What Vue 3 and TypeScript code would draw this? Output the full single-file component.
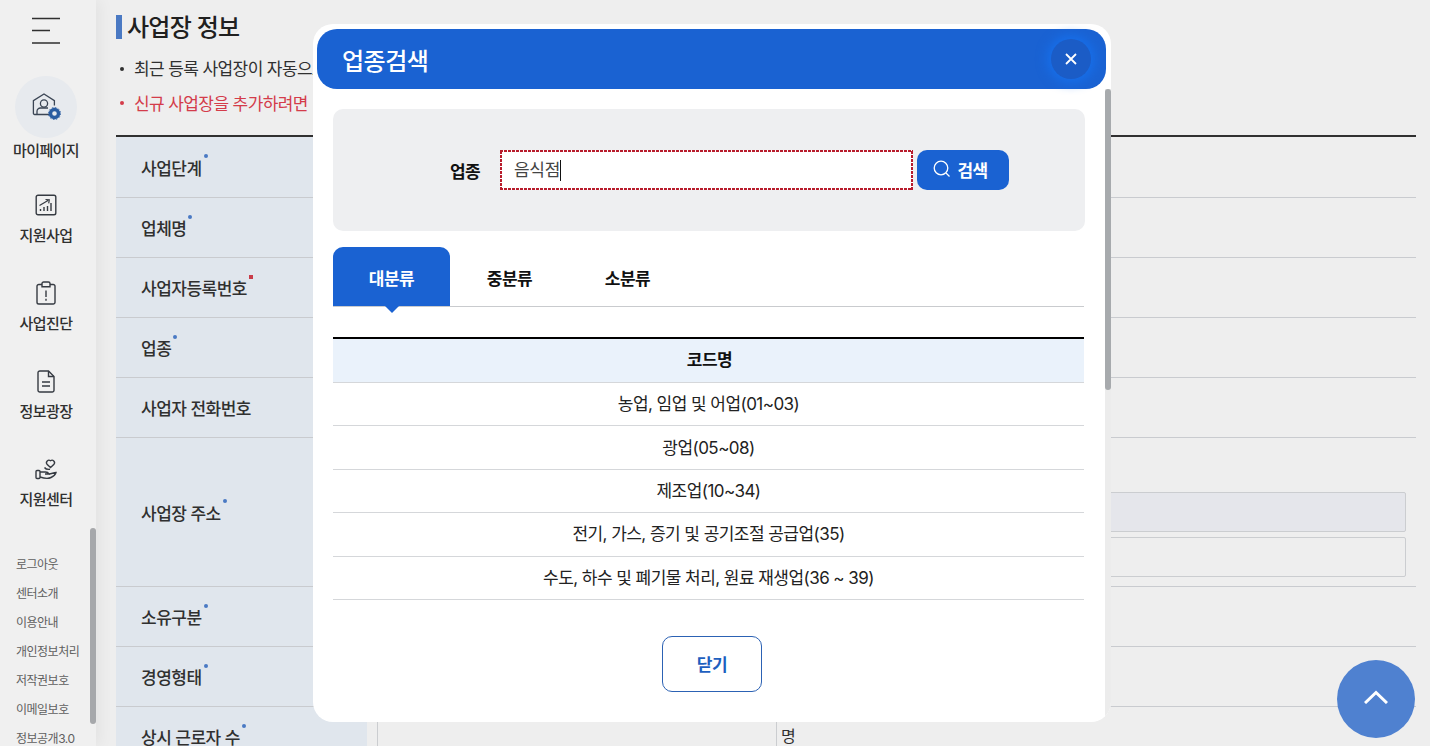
<template>
  <div class="page">
    <aside class="sidebar">
      <svg class="burger" width="28" height="28" viewBox="0 0 28 28" fill="none" stroke="#333" stroke-width="1.5">
        <path d="M0 1.5h28M0 13.5h18M0 26h28" />
      </svg>

      <nav class="nav">
        <a class="nav-item first">
          <span class="nav-circle">
            <svg width="30" height="30" viewBox="0 0 30 30" fill="none" stroke="#3f4a5a" stroke-width="1.3">
              <path d="M19 22.5H3.6a1.2 1.2 0 0 1-1.2-1.2V8.6L13 2l10.4 6.6v5" />
              <circle cx="13" cy="11.5" r="3.6" />
              <path d="M6 22v-2.5a3.5 3.5 0 0 1 3.5-3.5H17" />
              <circle cx="23.5" cy="21.5" r="4" stroke="#2d63ac" stroke-width="3.4" />
              <circle cx="23.5" cy="21.5" r="6" stroke="#2d63ac" stroke-width="1" stroke-dasharray="1.6 1.5" />
            </svg>
          </span>
          <span class="nav-label">마이페이지</span>
        </a>
        <a class="nav-item">
          <span class="nav-icon">
            <svg width="22" height="22" viewBox="0 0 22 22" fill="none" stroke="#3a3f47" stroke-width="1.4">
              <rect x="1.2" y="1.2" width="19.6" height="19.6" rx="1.8" />
              <path d="M4.5 11.5 13 6.5M10.5 5.5l3.8.3-.6 3.6" stroke-width="1.2" />
              <path d="M5.5 17v-2M9 17v-4M12.500 17v-5M16 17V9" />
            </svg>
          </span>
          <span class="nav-label">지원사업</span>
        </a>
        <a class="nav-item">
          <span class="nav-icon">
            <svg width="20" height="24" viewBox="0 0 20 24" fill="none" stroke="#3a3f47" stroke-width="1.4">
              <path d="M6 3.500H2.800A1.800 1.800 0 0 0 1 5.300v15.900A1.800 1.800 0 0 0 2.800 23h14.400a1.800 1.800 0 0 0 1.800-1.800V5.300a1.800 1.800 0 0 0-1.800-1.800H14" />
              <path d="M6 5.800V2.600A1.600 1.600 0 0 1 7.600 1h4.800A1.600 1.600 0 0 1 14 2.600v3.200z" />
              <path d="M10 9.500v6.500M10 17.800v2" />
            </svg>
          </span>
          <span class="nav-label">사업진단</span>
        </a>
        <a class="nav-item">
          <span class="nav-icon">
            <svg width="18" height="23" viewBox="0 0 18 23" fill="none" stroke="#3a3f47" stroke-width="1.4">
              <path d="M11.500 1H2.800A1.800 1.800 0 0 0 1 2.800v17.400A1.800 1.800 0 0 0 2.800 22h12.400a1.800 1.800 0 0 0 1.800-1.800V6.500z" />
              <path d="M11.500 1v5.500H17" />
              <path d="M5 12h8M5 16h8" />
            </svg>
          </span>
          <span class="nav-label">정보광장</span>
        </a>
        <a class="nav-item">
          <span class="nav-icon">
            <svg width="23" height="22" viewBox="0 0 23 22" fill="none" stroke="#3a3f47" stroke-width="1.4">
              <path d="M15.500 9.500 12 6.200a2.500 2.500 0 0 1 3.500-3.500 2.500 2.500 0 0 1 3.500 3.500z" />
              <rect x="1" y="12.500" width="4" height="8" rx="1" />
              <path d="M5 14h5.500c2 0 3 1 3.500 2h-4" />
              <path d="M5 19c6 2 9 1.500 11 .5 2-1 4.500-3 5-5-2.500 0-4.500 1.500-7 1.500" />
              <path d="M9.500 9.500c1 1.500 3.500 2 5.500 1.800" />
            </svg>
          </span>
          <span class="nav-label">지원센터</span>
        </a>
      </nav>

      <ul class="links">
        <li v-for="link in footerLinks" :key="link">{{ link }}</li>
      </ul>
      <div class="side-thumb"></div>
    </aside>

    <main class="main">
      <h1 class="page-title">사업장 정보</h1>
      <ul class="guide">
        <li>최근 등록 사업장이 자동으로</li>
        <li class="red">신규 사업장을 추가하려면</li>
      </ul>

      <div class="form">
        <div v-for="row in formRows" :key="row.label" class="form-row" :class="row.kind">
          <div class="form-th">
            {{ row.label }}<i v-if="row.mark" class="mark" :class="row.mark"></i>
          </div>
          <div class="form-td">
            <template v-if="row.kind === 'address'">
              <div class="box postcode"></div>
              <div class="box filled"></div>
              <div class="box"></div>
            </template>
            <template v-else-if="row.kind === 'workers'">
              <div class="box half"></div>
              <span class="unit">명</span>
            </template>
          </div>
        </div>
      </div>
    </main>

    <div class="scrim"></div>

    <section class="modal">
      <header class="modal-head">
        <h2>업종검색</h2>
        <button class="modal-x" type="button" aria-label="닫기">
          <svg width="12" height="12" viewBox="0 0 12 12" stroke="#fff" stroke-width="1.8" fill="none">
            <path d="M1 1l10 10M11 1 1 11" />
          </svg>
        </button>
      </header>

      <div class="modal-body">
        <div class="search-box">
          <label class="search-label">업종</label>
          <div class="search-input">음식점<i class="caret"></i></div>
          <button class="search-btn" type="button">
            <svg width="18" height="18" viewBox="0 0 18 18" fill="none" stroke="#fff" stroke-width="1.3">
              <circle cx="8" cy="8" r="6.800" />
              <path d="M13 13l3.500 3.500" />
            </svg>
            검색
          </button>
        </div>

        <div class="tabs">
          <button
            v-for="(tab, i) in tabs"
            :key="tab"
            class="tab"
            :class="{ active: i === 0 }"
            type="button"
          >
            {{ tab }}
          </button>
        </div>

        <table class="code-table">
          <thead>
            <tr><th>코드명</th></tr>
          </thead>
          <tbody>
            <tr v-for="code in codes" :key="code">
              <td>{{ code }}</td>
            </tr>
          </tbody>
        </table>

        <button class="close-btn" type="button">닫기</button>
      </div>

      <div class="modal-track"><div class="modal-thumb"></div></div>
    </section>

    <button class="to-top" type="button" aria-label="맨 위로">
      <svg width="24" height="14" viewBox="0 0 24 14" fill="none" stroke="#fff" stroke-width="3">
        <path d="M1 13 12 2.500 23 13" />
      </svg>
    </button>
  </div>
</template>

<script setup lang="ts">
interface FormRow {
  label: string
  mark?: 'blue' | 'red'
  kind?: 'address' | 'workers'
}

const footerLinks: string[] = [
  '로그아웃',
  '센터소개',
  '이용안내',
  '개인정보처리',
  '저작권보호',
  '이메일보호',
  '정보공개3.0',
]

const formRows: FormRow[] = [
  { label: '사업단계', mark: 'blue' },
  { label: '업체명', mark: 'blue' },
  { label: '사업자등록번호', mark: 'red' },
  { label: '업종', mark: 'blue' },
  { label: '사업자 전화번호' },
  { label: '사업장 주소', mark: 'blue', kind: 'address' },
  { label: '소유구분', mark: 'blue' },
  { label: '경영형태', mark: 'blue' },
  { label: '상시 근로자 수', mark: 'blue', kind: 'workers' },
]

const tabs: string[] = ['대분류', '중분류', '소분류']

const codes: string[] = [
  '농업, 임업 및 어업(01~03)',
  '광업(05~08)',
  '제조업(10~34)',
  '전기, 가스, 증기 및 공기조절 공급업(35)',
  '수도, 하수 및 폐기물 처리, 원료 재생업(36 ~ 39)',
]
</script>

<style>
html,
body {
  margin: 0;
  overflow: hidden;
}
</style>

<style scoped>
.page {
  position: relative;
  display: flex;
  width: 100%;
  height: 100vh;
  overflow: hidden;
  background: #fdfdfd;
  font-family: Inter, 'Noto Sans CJK KR', 'Noto Sans', sans-serif;
  color: #222;
}

/* sidebar */
.sidebar {
  position: relative;
  flex: 0 0 96px;
  z-index: 1;
  background: #fff;
  box-shadow: 4px 0 14px rgba(0, 0, 0, 0.05);
}

.burger {
  display: block;
  margin: 17px 0 0 32px;
}

.nav {
  margin-top: 31px;
}

.nav-item {
  display: flex;
  flex-direction: column;
  align-items: center;
  margin-bottom: 27px;
  margin-right: 4px;
}

.nav-item.first {
  margin-bottom: 24px;
}

.nav-circle {
  display: flex;
  align-items: center;
  justify-content: center;
  width: 62px;
  height: 62px;
  margin-bottom: 2px;
  border-radius: 50%;
  background: #f6f9fd;
}

.nav-icon {
  display: flex;
  align-items: center;
  justify-content: center;
  height: 40px;
}

.nav-label {
  height: 20px;
  padding-top: 1px;
  line-height: 20px;
  font-size: 15px;
  font-weight: 500;
  letter-spacing: -0.6px;
  white-space: nowrap;
  color: #333;
}

.links {
  list-style: none;
  margin: 40px 0 0;
  padding: 0 0 0 16px;
}

.links li {
  height: 29px;
  line-height: 29px;
  font-size: 12px;
  letter-spacing: -0.5px;
  white-space: nowrap;
  color: #666;
}

.side-thumb {
  position: absolute;
  right: 0;
  top: 528px;
  width: 6px;
  height: 196px;
  border-radius: 3px;
  background: #b1b3b6;
}

/* main form */
.main {
  flex: 1;
  min-width: 0;
  padding: 15px 14px 0 20px;
}

.page-title {
  box-sizing: border-box;
  height: 24px;
  margin: 0;
  padding: 1px 0 0 5px;
  border-left: 6px solid #4f81d0;
  line-height: 24px;
  font-size: 24px;
  font-weight: 500;
  letter-spacing: -0.75px;
  color: #222;
}

.guide {
  list-style: none;
  margin: 13px 0 0;
  padding: 0 0 0 18px;
  font-size: 17px;
  letter-spacing: -0.6px;
}

.guide li {
  position: relative;
  height: 34px;
  line-height: 34px;
  white-space: nowrap;
  color: #333;
}

.guide li::before {
  content: '';
  position: absolute;
  left: -14px;
  top: 15px;
  width: 4px;
  height: 4px;
  border-radius: 50%;
  background: currentColor;
}

.guide li.red {
  color: #e2404f;
  line-height: 36px;
}

.form {
  margin-top: 15px;
  border-top: 2px solid #333;
}

.form-row {
  display: flex;
  height: 60px;
  border-bottom: 1px solid #d6d8dc;
  box-sizing: border-box;
}

.form-row:first-child {
  height: 61px;
}

.form-row.address {
  height: 149px;
}

.form-th {
  display: flex;
  align-items: center;
  flex: 0 0 226px;
  padding-left: 25px;
  background: #eff5fc;
  font-size: 17px;
  font-weight: 500;
  letter-spacing: -0.5px;
  color: #333;
  white-space: pre;
}

.mark {
  align-self: center;
  width: 4px;
  height: 4px;
  margin: -22px 0 0 2px;
  border-radius: 50%;
}

.mark.blue {
  background: #4f81d0;
}

.mark.red {
  border-radius: 0;
  background: #d6404e;
}

.form-td {
  flex: 1;
  min-width: 0;
  padding: 0 10px;
}

.address .form-td {
  display: flex;
  flex-direction: column;
  gap: 5px;
  padding-top: 9px;
}

.workers .form-td {
  display: flex;
  padding-top: 9px;
}

.box {
  box-sizing: border-box;
  height: 40px;
  border: 1px solid #d8dade;
  border-radius: 2px;
}

.box.postcode {
  width: 300px;
}

.box.filled {
  background: #f4f5fa;
}

.box.half {
  width: 400px;
}

.unit {
  margin-left: 4px;
  line-height: 40px;
  font-size: 16px;
  color: #333;
}

/* modal */
.scrim {
  position: absolute;
  inset: 0;
  z-index: 2;
  background: rgba(0, 0, 0, 0.06);
}

.modal {
  position: absolute;
  left: 313px;
  top: 24px;
  z-index: 3;
  box-sizing: border-box;
  width: 798px;
  height: 698px;
  padding-top: 5px;
  overflow: hidden;
  border-radius: 20px;
  background: #fff;
}

.modal-head {
  display: flex;
  align-items: center;
  justify-content: space-between;
  height: 60px;
  margin: 0 5px 0 4px;
  padding: 0 15px 0 25px;
  border-radius: 20px;
  background: #1a62d2;
}

.modal-head h2 {
  margin: 0;
  font-size: 24px;
  font-weight: 500;
  letter-spacing: -0.5px;
  color: #fff;
}

.modal-x {
  display: flex;
  align-items: center;
  justify-content: center;
  width: 40px;
  height: 40px;
  padding: 0;
  border: 0;
  border-radius: 50%;
  background: #1b5cc6;
  box-shadow: 0 0 12px 3px #1671ee;
}

.modal-body {
  padding: 20px 27px 0 20px;
}

.search-box {
  display: flex;
  align-items: center;
  box-sizing: border-box;
  height: 122px;
  margin-right: -1px;
  padding-left: 117px;
  border-radius: 10px;
  background: #eeeff1;
}

.search-label {
  width: 50px;
  font-size: 17px;
  font-weight: 700;
  letter-spacing: -0.6px;
  color: #111;
}

/* square dots, a plain dotted outline comes out too faint */
.search-input {
  box-sizing: border-box;
  width: 413px;
  height: 40px;
  padding: 0 14px;
  background:
    repeating-linear-gradient(90deg, #b81c2c 0 3px, transparent 3px 4px) top / 100% 2px no-repeat,
    repeating-linear-gradient(90deg, #b81c2c 0 3px, transparent 3px 4px) bottom / 100% 2px no-repeat,
    repeating-linear-gradient(0deg, #b81c2c 0 3px, transparent 3px 4px) left / 2px 100% no-repeat,
    repeating-linear-gradient(0deg, #b81c2c 0 3px, transparent 3px 4px) right / 2px 100% no-repeat,
    #fff;
  line-height: 40px;
  font-size: 17px;
  letter-spacing: -0.3px;
  color: #444;
}

.caret {
  display: inline-block;
  width: 1px;
  height: 21px;
  vertical-align: -5px;
  background: #111;
}

.search-btn {
  display: flex;
  align-items: center;
  justify-content: center;
  gap: 6px;
  width: 92px;
  height: 40px;
  margin-left: 4px;
  padding: 0 5px 2px 0;
  border: 0;
  border-radius: 10px;
  background: #1a62d2;
  font-family: inherit;
  font-size: 17px;
  font-weight: 700;
  letter-spacing: -0.6px;
  color: #fff;
}

.tabs {
  display: flex;
  height: 60px;
  margin-top: 16px;
  box-sizing: border-box;
  border-bottom: 1px solid #c9cbce;
}

.tab {
  position: relative;
  width: 117px;
  height: 59px;
  margin-right: 1px;
  padding: 1px 0 0;
  border: 0;
  border-radius: 10px 10px 0 0;
  background: transparent;
  font-family: inherit;
  font-size: 17px;
  font-weight: 700;
  letter-spacing: -0.5px;
  color: #111;
}

.tab.active {
  background: #1a62d2;
  color: #fff;
}

.tab.active::after {
  content: '';
  position: absolute;
  left: 50%;
  top: 100%;
  margin-left: -7px;
  border: solid transparent;
  border-width: 7px 7px 0;
  border-top-color: #1a62d2;
}

.code-table {
  width: 100%;
  margin-top: 30px;
  border-top: 2px solid #000;
  border-collapse: separate;
  border-spacing: 0;
  table-layout: fixed;
  font-size: 17px;
  letter-spacing: -0.55px;
}

.code-table th {
  box-sizing: border-box;
  height: 44px;
  padding: 0 0 4px 2px;
  border-bottom: 1px solid #d5d7da;
  background: #eaf2fb;
  font-weight: 700;
  letter-spacing: -0.5px;
  color: #111;
}

.code-table td {
  box-sizing: border-box;
  height: 43.4px;
  padding: 0 0 3px;
  border-bottom: 1px solid #d5d7da;
  text-align: center;
  color: #222;
}

.close-btn {
  display: block;
  width: 100px;
  height: 56px;
  margin: 36px 0 0 329px;
  padding: 0;
  border: 1px solid #2c62b4;
  border-radius: 10px;
  background: #fff;
  font-family: inherit;
  font-size: 17px;
  font-weight: 700;
  letter-spacing: -0.5px;
  color: #1e5fbf;
}

.modal-track {
  position: absolute;
  right: 0;
  top: 65px;
  bottom: 0;
  width: 6px;
  background: #ececec;
}

.modal-thumb {
  height: 301px;
  border-radius: 3px;
  background: #a7aaad;
}

.to-top {
  position: absolute;
  right: 15px;
  bottom: 8px;
  z-index: 4;
  display: flex;
  align-items: center;
  justify-content: center;
  width: 78px;
  height: 78px;
  padding: 0 0 4px;
  border: 0;
  border-radius: 50%;
  background: #4f81d0;
}
</style>
